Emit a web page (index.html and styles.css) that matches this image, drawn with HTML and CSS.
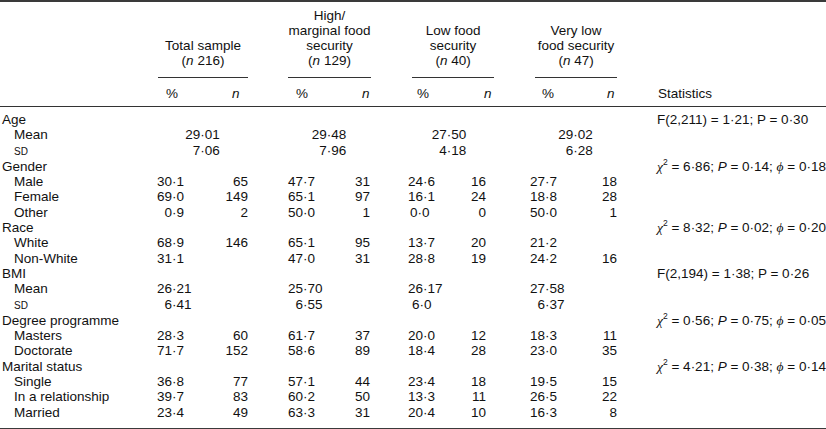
FILE: index.html
```html
<!DOCTYPE html>
<html lang="en">
<head>
<meta charset="utf-8">
<title>Sample characteristics by food security status</title>
<link rel="stylesheet" href="styles.css">
</head>
<body>
<table class="tbl">
  <colgroup>
    <col class="c-label">
    <col class="c-p1"><col class="c-n1">
    <col class="c-p2"><col class="c-n2">
    <col class="c-p3"><col class="c-n3">
    <col class="c-p4"><col class="c-n4">
    <col class="c-stat">
  </colgroup>
  <thead>
    <tr class="hrow-groups">
      <th></th>
      <th colspan="2" class="grp"><div class="gline gl1">Total sample<br>(<i>n</i> 216)</div></th>
      <th colspan="2" class="grp"><div class="gline gl2">High/<br>marginal food<br>security<br>(<i>n</i> 129)</div></th>
      <th colspan="2" class="grp"><div class="gline gl3">Low food<br>security<br>(<i>n</i> 40)</div></th>
      <th colspan="2" class="grp"><div class="gline gl4">Very low<br>food security<br>(<i>n</i> 47)</div></th>
      <th></th>
    </tr>
    <tr class="hrow-cols">
      <th></th>
      <th class="hp hp1">%</th><th class="hn hn1"><i>n</i></th>
      <th class="hp hp2">%</th><th class="hn hn2"><i>n</i></th>
      <th class="hp hp3">%</th><th class="hn hn3"><i>n</i></th>
      <th class="hp hp4">%</th><th class="hn hn4"><i>n</i></th>
      <th class="stat">Statistics</th>
    </tr>
  </thead>
  <tbody>
    <tr class="first">
      <td class="lab">Age</td>
      <td class="p g1"></td><td class="n"></td>
      <td class="p g2"></td><td class="n"></td>
      <td class="p g3"></td><td class="n"></td>
      <td class="p g4"></td><td class="n"></td>
      <td class="stat">F(2,211) = 1·21; P = 0·30</td>
    </tr>
    <tr>
      <td class="lab sub">Mean</td>
      <td colspan="2" class="span g1">29·01</td>
      <td colspan="2" class="span g2">29·48</td>
      <td colspan="2" class="span g3">27·50</td>
      <td colspan="2" class="span g4">29·02</td>
      <td class="stat"></td>
    </tr>
    <tr>
      <td class="lab sub"><span class="sc">SD</span></td>
      <td colspan="2" class="span g1"><span class="fig">0</span>7·06</td>
      <td colspan="2" class="span g2"><span class="fig">0</span>7·96</td>
      <td colspan="2" class="span g3"><span class="fig">0</span>4·18</td>
      <td colspan="2" class="span g4"><span class="fig">0</span>6·28</td>
      <td class="stat"></td>
    </tr>
    <tr>
      <td class="lab">Gender</td>
      <td class="p g1"></td><td class="n"></td>
      <td class="p g2"></td><td class="n"></td>
      <td class="p g3"></td><td class="n"></td>
      <td class="p g4"></td><td class="n"></td>
      <td class="stat"><i class="gk">χ</i><sup>2</sup> = 6·86; <i>P</i> = 0·14; <i class="gk">ϕ</i> = 0·18</td>
    </tr>
    <tr>
      <td class="lab sub">Male</td>
      <td class="p g1">30·1</td><td class="n">65</td>
      <td class="p g2">47·7</td><td class="n">31</td>
      <td class="p g3">24·6</td><td class="n">16</td>
      <td class="p g4">27·7</td><td class="n">18</td>
      <td class="stat"></td>
    </tr>
    <tr>
      <td class="lab sub">Female</td>
      <td class="p g1">69·0</td><td class="n">149</td>
      <td class="p g2">65·1</td><td class="n">97</td>
      <td class="p g3">16·1</td><td class="n">24</td>
      <td class="p g4">18·8</td><td class="n">28</td>
      <td class="stat"></td>
    </tr>
    <tr>
      <td class="lab sub">Other</td>
      <td class="p g1"><span class="fig">0</span>0·9</td><td class="n">2</td>
      <td class="p g2">50·0</td><td class="n">1</td>
      <td class="p g3 off2">0·0</td><td class="n">0</td>
      <td class="p g4">50·0</td><td class="n">1</td>
      <td class="stat"></td>
    </tr>
    <tr>
      <td class="lab">Race</td>
      <td class="p g1"></td><td class="n"></td>
      <td class="p g2"></td><td class="n"></td>
      <td class="p g3"></td><td class="n"></td>
      <td class="p g4"></td><td class="n"></td>
      <td class="stat"><i class="gk">χ</i><sup>2</sup> = 8·32; <i>P</i> = 0·02; <i class="gk">ϕ</i> = 0·20</td>
    </tr>
    <tr>
      <td class="lab sub">White</td>
      <td class="p g1">68·9</td><td class="n">146</td>
      <td class="p g2">65·1</td><td class="n">95</td>
      <td class="p g3">13·7</td><td class="n">20</td>
      <td class="p g4">21·2</td><td class="n"></td>
      <td class="stat"></td>
    </tr>
    <tr>
      <td class="lab sub">Non-White</td>
      <td class="p g1">31·1</td><td class="n"></td>
      <td class="p g2">47·0</td><td class="n">31</td>
      <td class="p g3">28·8</td><td class="n">19</td>
      <td class="p g4">24·2</td><td class="n">16</td>
      <td class="stat"></td>
    </tr>
    <tr>
      <td class="lab">BMI</td>
      <td class="p g1"></td><td class="n"></td>
      <td class="p g2"></td><td class="n"></td>
      <td class="p g3"></td><td class="n"></td>
      <td class="p g4"></td><td class="n"></td>
      <td class="stat">F(2,194) = 1·38; P = 0·26</td>
    </tr>
    <tr>
      <td class="lab sub">Mean</td>
      <td class="p g1">26·21</td><td class="n"></td>
      <td class="p g2">25·70</td><td class="n"></td>
      <td class="p g3">26·17</td><td class="n"></td>
      <td class="p g4">27·58</td><td class="n"></td>
      <td class="stat"></td>
    </tr>
    <tr>
      <td class="lab sub"><span class="sc">SD</span></td>
      <td class="p g1"><span class="fig">0</span>6·41</td><td class="n"></td>
      <td class="p g2"><span class="fig">0</span>6·55</td><td class="n"></td>
      <td class="p g3 off4">6·0</td><td class="n"></td>
      <td class="p g4"><span class="fig">0</span>6·37</td><td class="n"></td>
      <td class="stat"></td>
    </tr>
    <tr>
      <td class="lab">Degree programme</td>
      <td class="p g1"></td><td class="n"></td>
      <td class="p g2"></td><td class="n"></td>
      <td class="p g3"></td><td class="n"></td>
      <td class="p g4"></td><td class="n"></td>
      <td class="stat"><i class="gk">χ</i><sup>2</sup> = 0·56; <i>P</i> = 0·75; <i class="gk">ϕ</i> = 0·05</td>
    </tr>
    <tr>
      <td class="lab sub">Masters</td>
      <td class="p g1">28·3</td><td class="n">60</td>
      <td class="p g2">61·7</td><td class="n">37</td>
      <td class="p g3">20·0</td><td class="n">12</td>
      <td class="p g4">18·3</td><td class="n">11</td>
      <td class="stat"></td>
    </tr>
    <tr>
      <td class="lab sub">Doctorate</td>
      <td class="p g1">71·7</td><td class="n">152</td>
      <td class="p g2">58·6</td><td class="n">89</td>
      <td class="p g3">18·4</td><td class="n">28</td>
      <td class="p g4">23·0</td><td class="n">35</td>
      <td class="stat"></td>
    </tr>
    <tr>
      <td class="lab">Marital status</td>
      <td class="p g1"></td><td class="n"></td>
      <td class="p g2"></td><td class="n"></td>
      <td class="p g3"></td><td class="n"></td>
      <td class="p g4"></td><td class="n"></td>
      <td class="stat"><i class="gk">χ</i><sup>2</sup> = 4·21; <i>P</i> = 0·38; <i class="gk">ϕ</i> = 0·14</td>
    </tr>
    <tr>
      <td class="lab sub">Single</td>
      <td class="p g1">36·8</td><td class="n">77</td>
      <td class="p g2">57·1</td><td class="n">44</td>
      <td class="p g3">23·4</td><td class="n">18</td>
      <td class="p g4">19·5</td><td class="n">15</td>
      <td class="stat"></td>
    </tr>
    <tr>
      <td class="lab sub">In a relationship</td>
      <td class="p g1">39·7</td><td class="n">83</td>
      <td class="p g2">60·2</td><td class="n">50</td>
      <td class="p g3">13·3</td><td class="n">11</td>
      <td class="p g4">26·5</td><td class="n">22</td>
      <td class="stat"></td>
    </tr>
    <tr class="last">
      <td class="lab sub">Married</td>
      <td class="p g1">23·4</td><td class="n">49</td>
      <td class="p g2">63·3</td><td class="n">31</td>
      <td class="p g3">20·4</td><td class="n">10</td>
      <td class="p g4">16·3</td><td class="n">8</td>
      <td class="stat"></td>
    </tr>
  </tbody>
</table>
</body>
</html>
```
FILE: styles.css
```css
html, body {
  margin: 0;
  padding: 0;
  background: #ffffff;
}

body {
  font-family: "Liberation Sans", Arial, sans-serif;
  font-size: 13.5px;
  color: #111111;
}

.tbl {
  width: 826px;
  table-layout: fixed;
  border-collapse: separate;
  border-spacing: 0;
  border-top: 2px solid #3a3a3a;
  border-bottom: 2px solid #3a3a3a;
}

.c-label { width: 157px; }
.c-p1 { width: 48px; }
.c-n1 { width: 43px; }
.c-p2 { width: 82px; }
.c-n2 { width: 40px; }
.c-p3 { width: 80px; }
.c-n3 { width: 36px; }
.c-p4 { width: 89px; }
.c-n4 { width: 42px; }
.c-stat { width: 209px; }

th, td {
  padding: 0;
  font-weight: normal;
  line-height: 15.3px;
  white-space: nowrap;
  text-align: left;
  vertical-align: top;
}

/* header: group titles */
.hrow-groups th {
  vertical-align: bottom;
  padding-top: 6px;
  line-height: 15px;
}

.gline {
  text-align: center;
  padding-bottom: 9px;
  border-bottom: 1px solid #333333;
}

.gl1 { margin-left: 1px; }
.gl2 { margin-left: 40px; margin-right: -1px; }
.gl3 { margin-left: 42px; margin-right: -8px; }
.gl4 { margin-left: 49px; }

/* header: % / n */
.hrow-cols th {
  padding-top: 8px;
  padding-bottom: 5px;
  line-height: 15px;
  border-bottom: 1px solid #333333;
}

.hp1 { padding-left: 9px; }
.hp2 { padding-left: 48px; }
.hp3 { padding-left: 47px; }
.hp4 { padding-left: 56px; }

.hn1 { padding-left: 27px; }
.hn2 { padding-left: 32px; }
.hn3 { padding-left: 34px; }
.hn4 { padding-left: 32px; }

.hrow-cols .stat { padding-left: 41px; }

/* body */
tbody tr.first td { padding-top: 5px; }
tbody tr.last td { padding-bottom: 8px; }

.lab { padding-left: 2px; }
.lab.sub { padding-left: 14px; }

.sc {
  font-size: 10px;
  letter-spacing: 0.2px;
}

.fig { visibility: hidden; }

.p { text-align: left; }
.g1 { padding-left: 0; }
.g2 { padding-left: 40px; }
.g3 { padding-left: 38px; }
.g4 { padding-left: 44px; }
.g3.off2 { padding-left: 40px; }
.g3.off4 { padding-left: 42px; }

.span { text-align: center; }
.span.g3 { padding-left: 42px; }
.span.g4 { padding-left: 48px; }

.n { text-align: right; }

.stat { padding-left: 40px; }

.gk {
  font-family: "Liberation Serif", "Times New Roman", serif;
  font-size: 13.5px;
}

sup {
  font-size: 8.5px;
  line-height: 0;
  vertical-align: 6px;
}
```
